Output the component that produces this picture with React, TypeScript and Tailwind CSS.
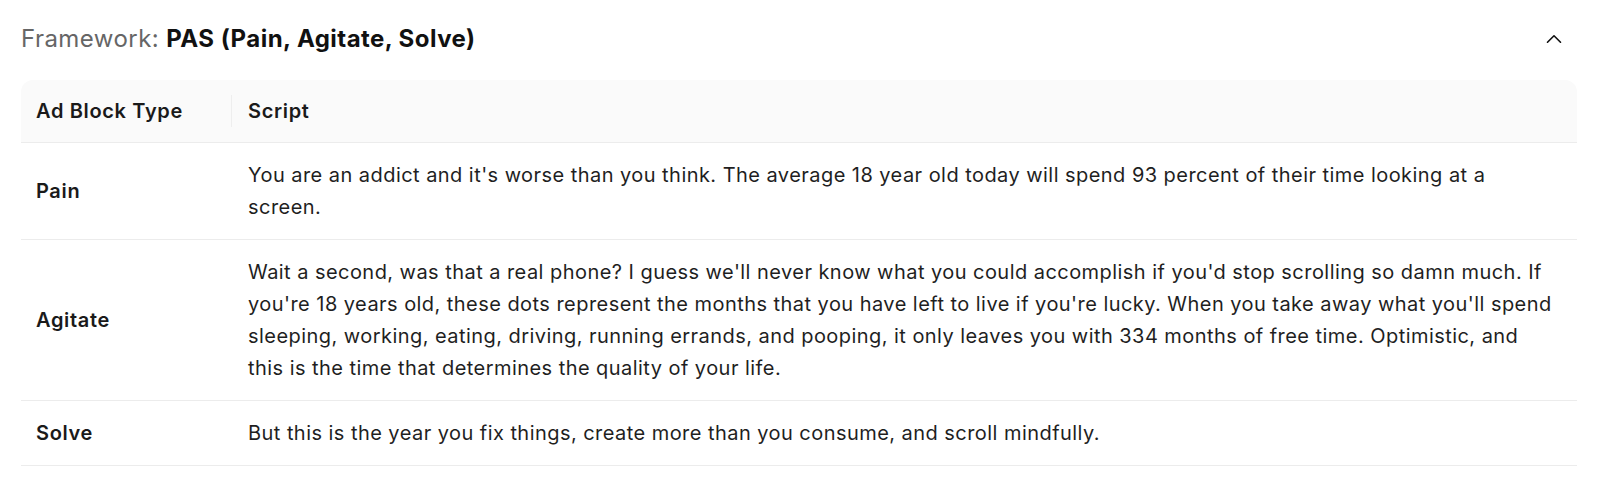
import { Fragment } from "react";
import { ChevronUp } from "lucide-react";

// lines are kept as they wrap in the design
const rows = [
  {
    type: "Pain",
    lines: [
      "You are an addict and it's worse than you think. The average 18 year old today will spend 93 percent of their time looking at a",
      "screen.",
    ],
  },
  {
    type: "Agitate",
    lines: [
      "Wait a second, was that a real phone? I guess we'll never know what you could accomplish if you'd stop scrolling so damn much. If",
      "you're 18 years old, these dots represent the months that you have left to live if you're lucky. When you take away what you'll spend",
      "sleeping, working, eating, driving, running errands, and pooping, it only leaves you with 334 months of free time. Optimistic, and",
      "this is the time that determines the quality of your life.",
    ],
  },
  {
    type: "Solve",
    lines: ["But this is the year you fix things, create more than you consume, and scroll mindfully."],
  },
];

const App = () => {
  return (
    <div className="min-h-[483px] w-full bg-white px-[21px] pt-[24px] font-['Inter',sans-serif] text-[#1a1a1a]">
      <div className="flex items-center justify-between pr-[12px]">
        <h2 className="text-[24px] leading-[30px] tracking-[0.45px]">
          <span className="text-[#666666]">Framework: </span>
          <span className="font-bold text-[#111111]">PAS (Pain, Agitate, Solve)</span>
        </h2>
        <ChevronUp className="h-[26px] w-[26px] text-[#111111]" strokeWidth={1.5} />
      </div>

      <div className="mt-[26px] w-[1556px]">
        <table className="w-full border-collapse text-left">
          <thead>
            <tr className="border-b border-[#ececec] bg-[#fafafa]">
              <th className="h-[62px] w-[211px] rounded-tl-[12px] px-[15px] text-[20px] font-semibold tracking-[0.65px]">
                <div className="relative flex h-full items-center">
                  Ad Block Type
                  <span className="absolute right-[-15px] top-[15px] h-[32px] w-px bg-[#eeeeee]" />
                </div>
              </th>
              <th className="h-[62px] rounded-tr-[12px] px-[16px] text-[20px] font-semibold tracking-[0.65px]">
                Script
              </th>
            </tr>
          </thead>
          <tbody>
            {rows.map((row) => (
              <tr key={row.type} className="border-b border-[#ececec]">
                <td className="px-[15px] py-[16px] align-middle text-[20px] font-semibold leading-[32px] tracking-[0.65px]">
                  {row.type}
                </td>
                <td className="whitespace-nowrap px-[16px] py-[16px] text-[20px] leading-[32px] tracking-[0.45px] text-[#1f1f1f]">
                  {row.lines.map((line, i) => (
                    <Fragment key={i}>
                      {i > 0 && <br />}
                      {line}
                    </Fragment>
                  ))}
                </td>
              </tr>
            ))}
          </tbody>
        </table>
      </div>
    </div>
  );
};

export default App;
